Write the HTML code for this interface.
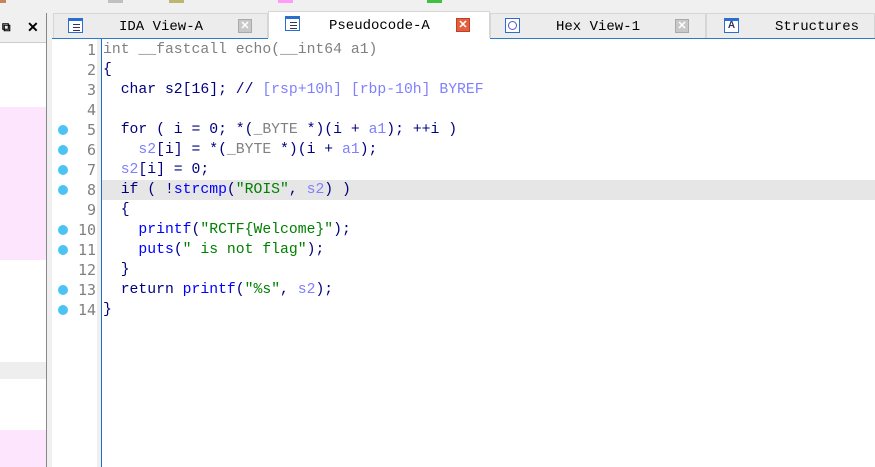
<!DOCTYPE html>
<html><head><style>
*{margin:0;padding:0;box-sizing:border-box}
body{width:875px;height:467px;overflow:hidden;background:#fff;position:relative;font-family:"Liberation Mono",monospace}
.a{position:absolute}
.code{font-size:14.75px;line-height:20px;white-space:pre}
.ln{color:#808080;text-align:right;width:45px;left:51px;font-family:"DejaVu Sans Mono",monospace;font-size:15px}
.k{color:#000080}.f{color:#0000ff}.v{color:#8080ff}.s{color:#008000}.g{color:#808080}
.dot{position:absolute;width:10px;height:10px;border-radius:50%;background:#4cc3f5;left:58px}
.tab{position:absolute;top:13px;height:26px;background:#ececec;border:1px solid #d6d6d6;font-size:14px;line-height:26px;color:#000}
.ic{position:absolute;top:4px;width:15px;height:15px;border:1px solid #2a6fd0;border-top:3px solid #2a6fd0;background:#fff}
.ic i{position:absolute;left:4px;height:1px;width:7px;background:#336}
.x{position:absolute;top:5px;width:14px;height:14px;background:#c8c8c8;border:1px solid #aaa;color:#fff;font:bold 11px/12px "Liberation Sans",sans-serif;text-align:center}
</style></head><body>
<div class="a" style="left:0;top:0;width:875px;height:13px;background:#f0f0f0"></div>
<div class="a" style="left:0;top:0;width:6px;height:3px;background:#c8845a"></div>
<div class="a" style="left:108px;top:0;width:15px;height:3px;background:#c0c0c0"></div>
<div class="a" style="left:169px;top:0;width:15px;height:3px;background:#b8b870"></div>
<div class="a" style="left:278px;top:0;width:15px;height:3px;background:#ff9cf8"></div>
<div class="a" style="left:427px;top:0;width:15px;height:3px;background:#40c040"></div>
<div class="a" style="left:0;top:13px;width:47px;height:454px;background:#fff;border-right:1px solid #888"></div>
<div class="a" style="left:0;top:13px;width:46px;height:30px;background:#f0f0f0;border-bottom:1px solid #ccc;font:bold 14px/28px 'Liberation Sans',sans-serif"><span style="position:absolute;left:2px;font-size:12px">⧉</span><span style="position:absolute;left:27px">✕</span></div>
<div class="a" style="left:0;top:107px;width:46px;height:153px;background:#fde6fd"></div>
<div class="a" style="left:0;top:362px;width:46px;height:17px;background:#eee"></div>
<div class="a" style="left:0;top:430px;width:46px;height:37px;background:#fde6fd"></div>
<div class="a" style="left:47px;top:13px;width:5px;height:454px;background:#f0f0f0"></div>
<div class="a" style="left:52px;top:13px;width:823px;height:26px;background:#f0f0f0"></div>
<div class="tab" style="left:53px;width:215px"><div class="ic" style="left:14px"><i style="top:3px"></i><i style="top:6px"></i><i style="top:9px"></i></div><span style="position:absolute;left:65px">IDA View-A</span><div class="x" style="left:184px">✕</div></div>
<div class="tab" style="left:268px;width:222px;background:#fff;top:11px;height:28px;border-bottom:none"><div class="ic" style="left:16px"><i style="top:3px"></i><i style="top:6px"></i><i style="top:9px"></i></div><span style="position:absolute;left:60px;top:1px">Pseudocode-A</span><div class="x" style="left:187px;top:6px;background:#e06040;border-color:#c04020">✕</div></div>
<div class="tab" style="left:490px;width:216px"><div class="ic" style="left:14px;border-top-width:1px"><div style="position:absolute;left:2px;top:2px;width:9px;height:9px;border:1px solid #55c;border-radius:50%"></div></div><span style="position:absolute;left:65px">Hex View-1</span><div class="x" style="left:184px">✕</div></div>
<div class="tab" style="left:706px;width:169px"><div class="ic" style="left:17px;font:bold 10px/10px sans-serif;color:#336;text-align:center">A</div><span style="position:absolute;left:68px">Structures</span></div>
<div class="a" style="left:52px;top:38px;width:823px;height:1px;background:#2a7ad0"></div>
<div class="a" style="left:268px;top:38px;width:222px;height:1px;background:#fff"></div>
<div class="a" style="left:97px;top:39px;width:4px;height:428px;background:#f0f0f0"></div>
<div class="a" style="left:101px;top:39px;width:1px;height:428px;background:#1a6fc8"></div>
<div class="a" style="left:102px;top:180px;width:773px;height:20px;background:#e6e6e6"></div>
<div class="a code ln" style="top:40px">1
2
3
4
5
6
7
8
9
10
11
12
13
14</div>
<div class="dot" style="top:125px"></div><div class="dot" style="top:145px"></div><div class="dot" style="top:165px"></div><div class="dot" style="top:185px"></div><div class="dot" style="top:225px"></div><div class="dot" style="top:245px"></div><div class="dot" style="top:285px"></div><div class="dot" style="top:305px"></div>
<div class="a code" style="left:103px;top:40px"><span class="g">int __fastcall echo(__int64 a1)</span>
<span class="k">{</span>
<span class="k">  char s2[16]; // </span><span class="v">[rsp+10h] [rbp-10h] BYREF</span>

<span class="k">  for ( i = 0; *(</span><span class="g">_BYTE</span><span class="k"> *)(i + </span><span class="v">a1</span><span class="k">); ++i )</span>
<span class="v">    s2</span><span class="k">[i] = *(</span><span class="g">_BYTE</span><span class="k"> *)(i + </span><span class="v">a1</span><span class="k">);</span>
<span class="v">  s2</span><span class="k">[i] = 0;</span>
<span class="k">  if ( !</span><span class="f">strcmp</span><span class="k">(</span><span class="s">"ROIS"</span><span class="k">, </span><span class="v">s2</span><span class="k">) )</span>
<span class="k">  {</span>
<span class="f">    printf</span><span class="k">(</span><span class="s">"RCTF{Welcome}"</span><span class="k">);</span>
<span class="f">    puts</span><span class="k">(</span><span class="s">" is not flag"</span><span class="k">);</span>
<span class="k">  }</span>
<span class="k">  return </span><span class="f">printf</span><span class="k">(</span><span class="s">"%s"</span><span class="k">, </span><span class="v">s2</span><span class="k">);</span>
<span class="k">}</span></div>
</body></html>
